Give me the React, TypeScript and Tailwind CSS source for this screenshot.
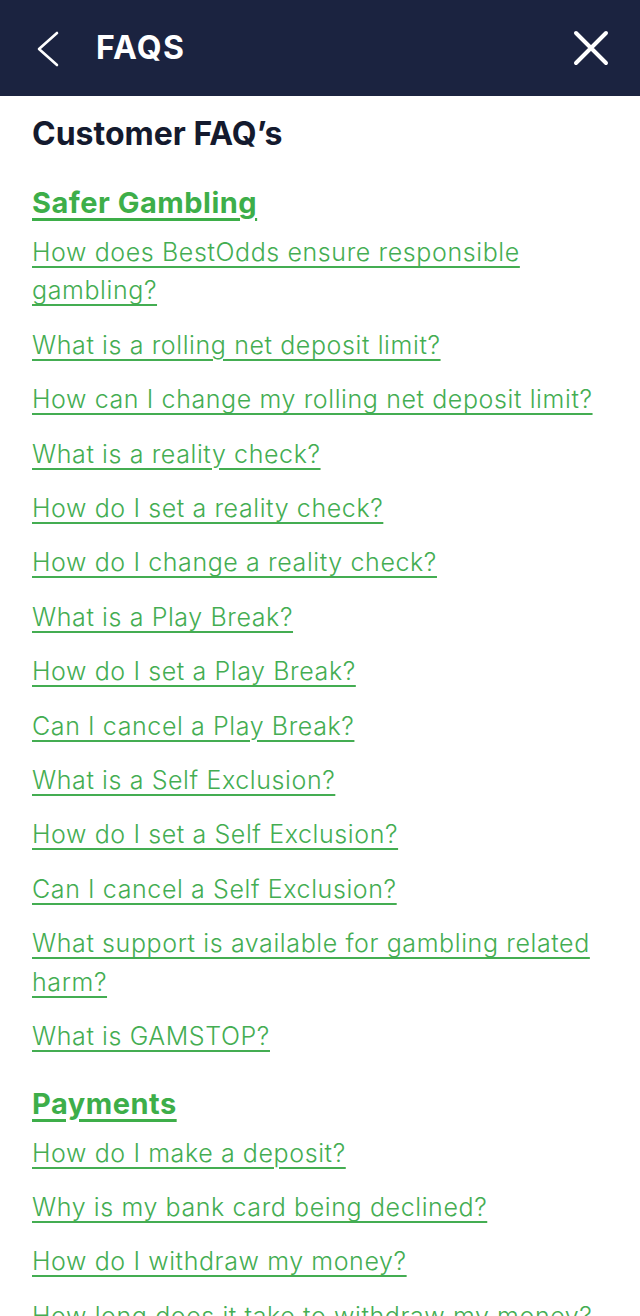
import React from "react";

const sections = [
  {
    title: "Safer Gambling",
    links: [
      "How does BestOdds ensure responsible gambling?",
      "What is a rolling net deposit limit?",
      "How can I change my rolling net deposit limit?",
      "What is a reality check?",
      "How do I set a reality check?",
      "How do I change a reality check?",
      "What is a Play Break?",
      "How do I set a Play Break?",
      "Can I cancel a Play Break?",
      "What is a Self Exclusion?",
      "How do I set a Self Exclusion?",
      "Can I cancel a Self Exclusion?",
      "What support is available for gambling related harm?",
      "What is GAMSTOP?",
    ],
  },
  {
    title: "Payments",
    links: [
      "How do I make a deposit?",
      "Why is my bank card being declined?",
      "How do I withdraw my money?",
      "How long does it take to withdraw my money?",
      "Can I cancel a withdrawal?",
      "What payment methods are accepted?",
    ],
  },
];

export default function App() {
  return (
    <div className="w-[640px] h-[1316px] overflow-hidden bg-white" style={{ fontFamily: "Inter, 'Noto Sans', sans-serif" }}>
      <header className="h-[96px] bg-[#1b2340] flex items-center pl-[36px] pr-[31px]">
        <svg width="24" height="36" viewBox="0 0 24 36" fill="none" className="mt-[1px]">
          <path d="M21 2 L3 18 L21 34" stroke="white" strokeWidth="2.6" strokeLinecap="round" strokeLinejoin="round" />
        </svg>
        <h1 className="ml-[36px] text-white text-[32px] font-bold tracking-[1.2px]">FAQS</h1>
        <div className="flex-1" />
        <svg width="36" height="36" viewBox="0 0 36 36" fill="none">
          <path d="M3 3 L33 33 M33 3 L3 33" stroke="white" strokeWidth="4" strokeLinecap="round" />
        </svg>
      </header>
      <main className="px-[32px] pt-[20px]">
        <h2 className="text-[#141a2e] text-[32px] leading-[36px] font-bold mb-[31px]">Customer FAQ’s</h2>
        {sections.map((s, i) => (
          <section key={s.title} className={i > 0 ? "mt-[28px]" : ""}>
            <h3 className="text-[#3dae49] text-[29px] leading-[40px] font-bold tracking-[0.5px] underline underline-offset-[5px] decoration-[3px] mb-[10px]">
              {s.title}
            </h3>
            <ul>
              {s.links.map((l) => (
                <li key={l} className="mb-[16px]">
                  <a href="#" className="text-[#44ad52] text-[25px] leading-[38.4px] font-light tracking-[0.6px] underline underline-offset-[5px] decoration-[2px]">
                    {l}
                  </a>
                </li>
              ))}
            </ul>
          </section>
        ))}
      </main>
    </div>
  );
}
